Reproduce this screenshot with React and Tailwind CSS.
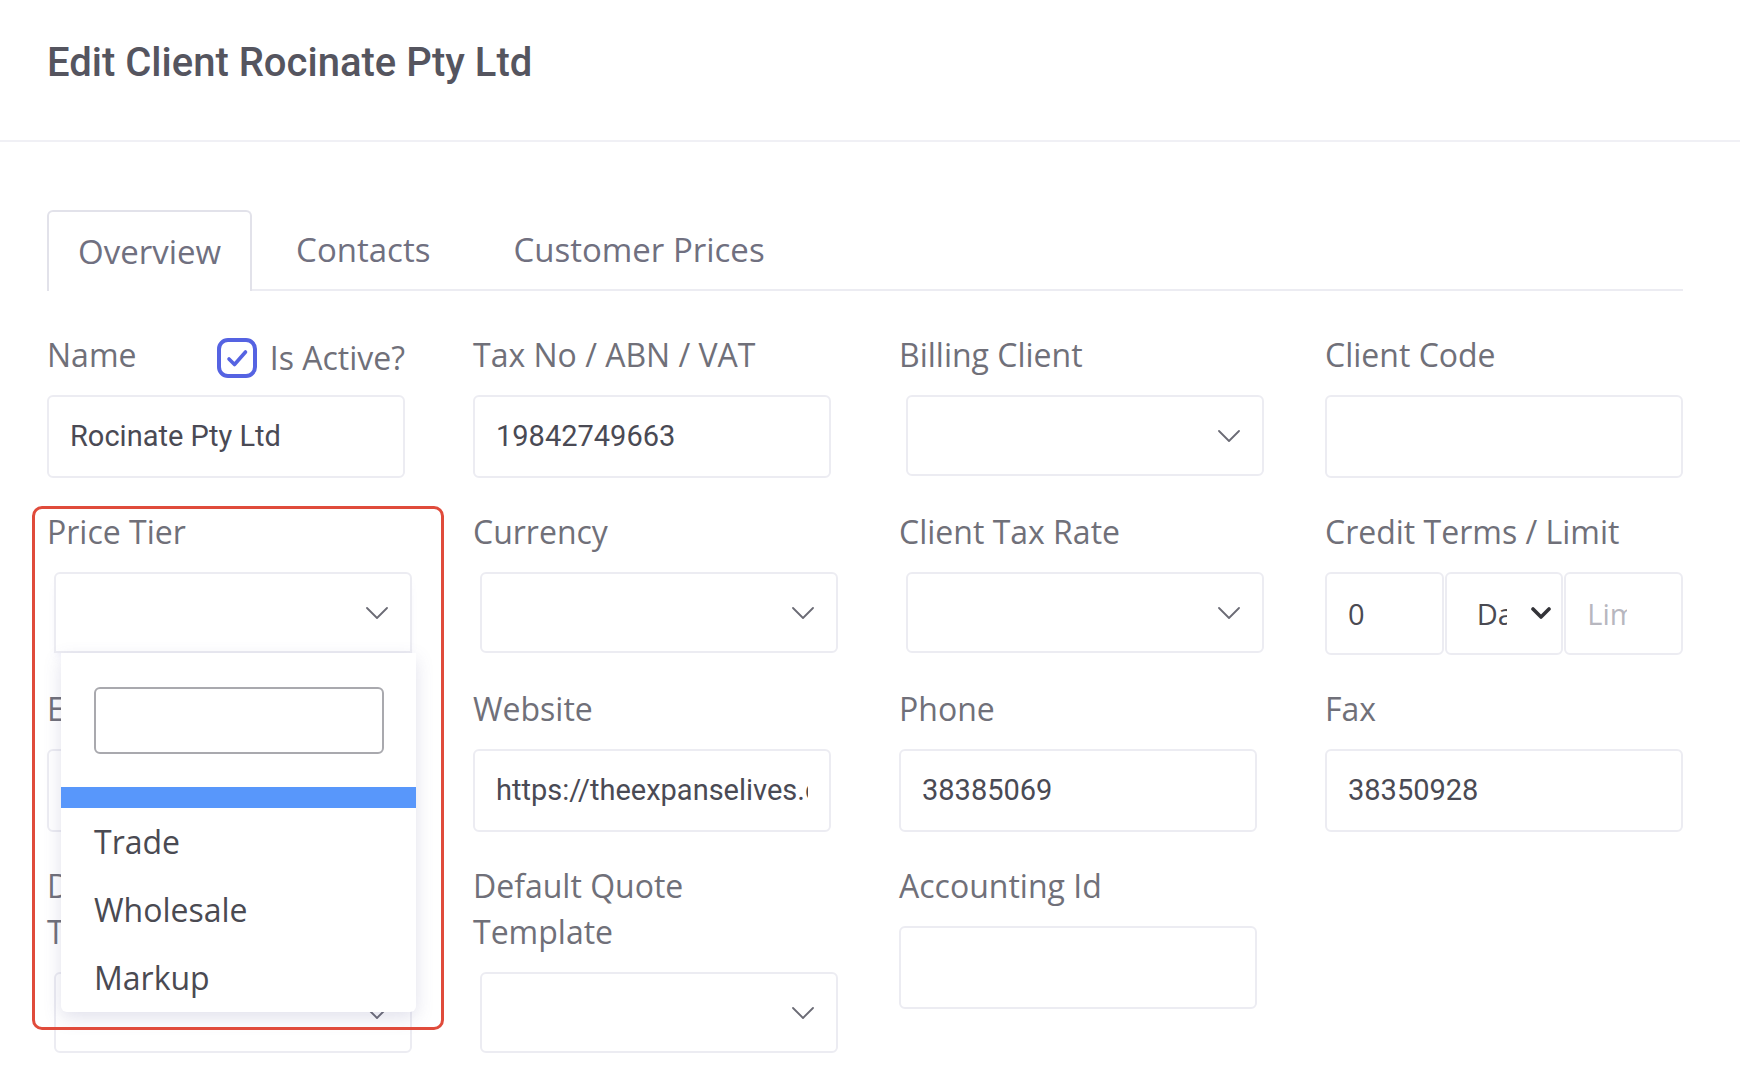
import React from "react";

const LABEL = "block text-[32px] leading-[46px] text-[#707079] whitespace-nowrap";
const VALUE = "font-['Roboto',sans-serif] text-[29px] text-[#4a4a54] whitespace-nowrap overflow-hidden";
const TAB = "text-[33px] text-[#707080]";

function Chevron() {
  return (
    <svg width="22" height="12" viewBox="0 0 22 12" className="shrink-0">
      <path d="M1 1l10 10L21 1" stroke="#6b6b75" strokeWidth="1.8" fill="none" strokeLinecap="round" strokeLinejoin="round" />
    </svg>
  );
}

function BoldChevron() {
  return (
    <svg width="20" height="13" viewBox="0 0 20 13" className="shrink-0">
      <path d="M2 2l8 8 8-8" stroke="#333338" strokeWidth="3.6" fill="none" strokeLinecap="round" strokeLinejoin="round" />
    </svg>
  );
}

function Input({ value }) {
  return (
    <div className="h-[83px] w-full border-2 border-[#ececf2] rounded-[6px] bg-white px-[21px] flex items-center">
      <div className={VALUE}>{value}</div>
    </div>
  );
}

function Select2({ open = false }) {
  return (
    <div
      className={`h-[81px] w-[358px] ml-[7px] border-2 border-[#ececf2] rounded-[6px] bg-white flex items-center justify-end pr-[22px] ${
        open ? "rounded-b-none shadow-[0_8px_10px_-6px_rgba(110,110,200,0.22)]" : ""
      }`}
    >
      <Chevron />
    </div>
  );
}

function Field({ label, children, className = "" }) {
  return (
    <div className={className}>
      <div className="mb-[17px]">{label}</div>
      {children}
    </div>
  );
}

export default function App() {
  return (
    <div className="min-h-screen w-full bg-white font-['Open_Sans',sans-serif] text-[#707079]">
      <header className="h-[142px] border-b-2 border-[#f0f0f5] px-[47px] pt-[39px]">
        <h1 className="font-['Roboto',sans-serif] font-medium text-[40px] leading-[48px] text-[#55555f]">
          Edit Client Rocinate Pty Ltd
        </h1>
      </header>

      <div className="pl-[47px] pr-[57px]">
        <div className="mt-[68px] flex border-b-2 border-[#ececf2]">
          <div className={`-mb-[2px] h-[81px] px-[29px] flex items-center border-2 border-b-0 border-[#e2e2ea] rounded-t-[6px] bg-white ${TAB}`}>
            Overview
          </div>
          <div className={`h-[79px] pl-[44px] pr-[36px] flex items-center ${TAB}`}>Contacts</div>
          <div className={`h-[79px] pl-[47px] pr-[32px] flex items-center ${TAB}`}>Customer Prices</div>
        </div>

        <div className="mt-[41px] grid grid-cols-4 gap-x-[68px] gap-y-[31px]">
          {/* Row 1 */}
          <Field
            label={
              <div className="h-[46px] flex items-center justify-between">
                <span className={LABEL}>Name</span>
                <div className="flex items-center gap-[13px] translate-y-[3px]">
                  <svg width="40" height="40" viewBox="0 0 40 40">
                    <rect x="2" y="2" width="36" height="36" rx="9" fill="white" stroke="#5563e2" strokeWidth="4" />
                    <path d="M12 21l5.5 5.5L28.5 14" stroke="#5563e2" strokeWidth="3.6" fill="none" strokeLinecap="round" strokeLinejoin="round" />
                  </svg>
                  <span className={LABEL}>Is Active?</span>
                </div>
              </div>
            }
          >
            <Input value="Rocinate Pty Ltd" />
          </Field>
          <Field label={<span className={LABEL}>Tax No / ABN / VAT</span>}>
            <Input value="19842749663" />
          </Field>
          <Field label={<span className={LABEL}>Billing Client</span>}>
            <Select2 />
          </Field>
          <Field label={<span className={LABEL}>Client Code</span>}>
            <Input value="" />
          </Field>

          {/* Row 2 */}
          <div className="relative z-10">
            <Field label={<span className={LABEL}>Price Tier</span>}>
              <Select2 open />
            </Field>
            <div className="absolute left-[14px] top-[144px] w-[355px] bg-white rounded-b-[6px] shadow-[0_6px_18px_rgba(90,90,150,0.18)]">
              <div className="pt-[34px] pb-[33px] pl-[33px] pr-[32px]">
                <div className="h-[67px] w-[290px] border-2 border-[#a9a9ae] rounded-[6px] bg-white" />
              </div>
              <div className="h-[21px] bg-[#5897fb]" />
              <div className="h-[68px] pl-[33px] flex items-center text-[32px] text-[#4a4a52]">Trade</div>
              <div className="h-[68px] pl-[33px] flex items-center text-[32px] text-[#4a4a52]">Wholesale</div>
              <div className="h-[68px] pl-[33px] flex items-center text-[32px] text-[#4a4a52]">Markup</div>
            </div>
            <div className="pointer-events-none absolute left-[-15px] top-[-3px] w-[412px] h-[524px] border-[3px] border-[#e04b3b] rounded-[10px] z-30" />
          </div>
          <Field label={<span className={LABEL}>Currency</span>}>
            <Select2 />
          </Field>
          <Field label={<span className={LABEL}>Client Tax Rate</span>}>
            <Select2 />
          </Field>
          <Field label={<span className={LABEL}>Credit Terms / Limit</span>}>
            <div className="grid grid-cols-3 gap-[1px]">
              <div className="h-[83px] min-w-0 border-2 border-[#ececf2] rounded-[6px] pl-[21px] flex items-center text-[29px] text-[#4a4a52]">
                0
              </div>
              <div className="h-[83px] min-w-0 border-2 border-[#ececf2] rounded-[6px] pl-[30px] pr-[10px] flex items-center text-[29px] text-[#4a4a52]">
                <div className="w-[30px] overflow-hidden whitespace-nowrap">Days</div>
                <div className="ml-auto flex items-center">
                  <BoldChevron />
                </div>
              </div>
              <div className="h-[83px] min-w-0 border-2 border-[#ececf2] rounded-[6px] pl-[21px] flex items-center text-[29px] text-[#b7b7bf]">
                <div className="w-[40px] overflow-hidden whitespace-nowrap">Limit</div>
              </div>
            </div>
          </Field>

          {/* Row 3 */}
          <Field label={<span className={LABEL}>Email</span>}>
            <Input value="" />
          </Field>
          <Field label={<span className={LABEL}>Website</span>}>
            <Input value="https://theexpanselives.com" />
          </Field>
          <Field label={<span className={LABEL}>Phone</span>}>
            <Input value="38385069" />
          </Field>
          <Field label={<span className={LABEL}>Fax</span>}>
            <Input value="38350928" />
          </Field>

          {/* Row 4 */}
          <Field
            label={
              <span className={LABEL}>
                Default Invoice
                <br />
                Template
              </span>
            }
          >
            <Select2 />
          </Field>
          <Field
            label={
              <span className={LABEL}>
                Default Quote
                <br />
                Template
              </span>
            }
          >
            <Select2 />
          </Field>
          <Field label={<span className={LABEL}>Accounting Id</span>}>
            <Input value="" />
          </Field>
          <div />
        </div>
      </div>
    </div>
  );
}
